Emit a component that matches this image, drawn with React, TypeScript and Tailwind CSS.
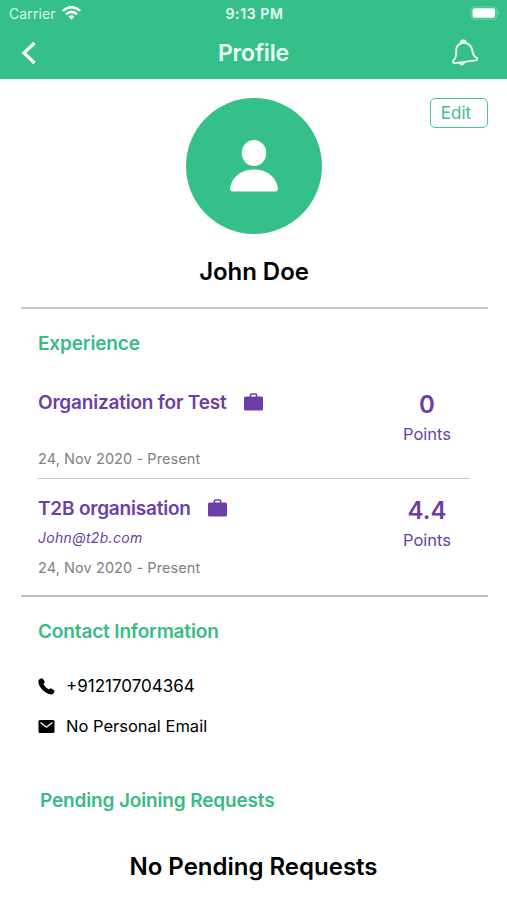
import type { ReactNode } from "react";

function Briefcase() {
  return (
    <svg className="mb-[2px] h-[18px] w-[19px] shrink-0" viewBox="0 0 19 18" fill="#6b3fa5">
      <path
        fillRule="evenodd"
        d="M5.600 3.400V2Q5.600.2 7.400.2h4.200Q13.400.2 13.400 2v1.400h4Q19 3.400 19 5v11q0 1.600-1.600 1.600H1.600Q0 17.600 0 16V5q0-1.600 1.600-1.600zM7.200 3.400h4.600V1.700H7.200z"
      />
    </svg>
  );
}

function StatusBar() {
  return (
    <div className="flex h-7 items-center justify-between pl-[9px] pr-[7px]">
      <div className="flex w-[150px] items-center gap-[6px]">
        <span className="text-[14px] leading-7 tracking-[0.1px] text-[#d9f7e9]">Carrier</span>
        <svg className="mt-[-2px] h-[14px] w-[19px]" viewBox="0 0 19 14" fill="none" stroke="#fff" strokeWidth="2.500">
          <path d="M.8 4.900Q9.500-2.500 18.200 4.900" />
          <path d="M4 8.200Q9.500 3.500 15 8.200" />
          <path d="M6.500 10.600Q9.500 8 12.500 10.600L9.500 13.800z" fill="#fff" stroke="none" />
        </svg>
      </div>
      <span className="text-[14px] font-semibold leading-7 tracking-[0.6px] text-[#e9fff5]">9:13 PM</span>
      <div className="flex w-[150px] justify-end">
        <svg className="mt-[-2px] h-[14px] w-[30px]" viewBox="0 0 30 14" fill="none">
          <rect x="1" y=".8" width="25.800" height="12.400" rx="3.500" stroke="#73d3ab" />
          <rect x="2.500" y="2.200" width="22.600" height="9.600" rx="2" fill="#fff" />
          <path d="M28 4.800Q29.600 6.900 28 9z" fill="#8fdfbc" />
        </svg>
      </div>
    </div>
  );
}

function Header() {
  return (
    <header className="h-[79px] bg-[#34c088]">
      <StatusBar />
      <div className="flex h-[50px] items-center justify-between pl-[21px] pr-[28px]">
        <svg className="h-6 w-[60px]" viewBox="0 0 60 24" fill="none" stroke="#fff" strokeWidth="3.200">
          <path d="M13.500 2L3 12l10.500 10" />
        </svg>
        <h1 className="text-[23px] font-semibold leading-[50px] tracking-[-0.15px] text-[#ecfff6]">Profile</h1>
        <div className="flex w-[53px] justify-end">
          <svg
            className="h-[28px] w-[28px]"
            viewBox="0 0 28 28"
            fill="none"
            stroke="#f0fff8"
            strokeWidth="1.900"
            strokeLinejoin="round"
            strokeLinecap="round"
          >
            <path d="M10.300 4.100C6.400 5.500 5 8.800 5.200 12.500C5.400 17.500 4.600 19.200 2.800 21C1.500 22.500 1.800 24.300 4 24.100L24.400 21.400C26.900 21 26.900 19 25.200 18.400C22.800 17.400 22 15.700 21.300 11.500C20.500 7.300 18.200 4.700 14.600 4" />
            <path d="M9.900 4.400C9.700.8 14.400.4 15.200 4.200Q12.500 3.200 9.900 4.400" />
            <path d="M9 24Q10.800 27.300 13.300 23.400" />
          </svg>
        </div>
      </div>
    </header>
  );
}

interface JobProps {
  name: string;
  email?: string;
  points: string;
}

function Job({ name, email, points }: JobProps) {
  return (
    <div className="flex justify-between">
      <div>
        <div className="flex h-[29px] items-center gap-[17px]">
          <span className="text-[19px] font-semibold leading-[29px] tracking-[-0.2px]">{name}</span>
          <Briefcase />
        </div>
        {email ? (
          <div className="h-[30px] text-[14px] italic leading-[30px] tracking-[0.3px]">{email}</div>
        ) : (
          <div className="h-[27px]" />
        )}
        <div className="h-[29px] text-[14.500px] leading-[29px] tracking-[0.080px] text-[#808080]">24, Nov 2020 - Present</div>
      </div>
      <div className="w-[86px] pt-[2px] text-center">
        <div className="text-[24px] font-semibold leading-[29px]">{points}</div>
        <div className="text-[16.500px] leading-[30px]">Points</div>
      </div>
    </div>
  );
}

function SectionTitle({ children }: { children: ReactNode }) {
  return <h2 className="text-[19px] font-semibold leading-[30px] tracking-[-0.150px] text-[#39bb85]">{children}</h2>;
}

export default function App() {
  return (
    <main className="h-[900px] w-full overflow-hidden bg-white font-['Inter',sans-serif] text-black">
      <Header />

      <section className="ml-[21px] mr-[19px] h-[230px] border-b-2 border-[#c6c6c6]">
        <div className="grid grid-cols-[165px_136px_1fr] pt-[19px]">
          <div className="col-start-2 flex size-[136px] items-center justify-center rounded-full bg-[#34c088]">
            <svg className="h-[52px] w-[48px]" viewBox="0 0 48 52" fill="#fff">
              <ellipse cx="24" cy="13" rx="12.300" ry="13" />
              <path d="M3 51.500Q0 51.500 0 48.500C1.500 37 11 29.500 24 29.500S46.500 37 48 48.500Q48 51.500 45 51.500z" />
            </svg>
          </div>
          <button className="h-[30px] w-[58px] justify-self-end rounded-[5px] border-[1.500px] border-[#4cc596] pr-[6px] text-[17px] leading-[25px] text-[#45bd8c]">
            Edit
          </button>
        </div>
        <div className="mt-[22px] pr-px text-center text-[24px] font-semibold leading-[31px] tracking-[-0.05px]">John Doe</div>
      </section>

      <section className="ml-[21px] mr-[19px] h-[288px] border-b-2 border-[#bfbfbf] pl-[17px] pr-[18px] pt-[20px]">
        <SectionTitle>Experience</SectionTitle>
        <div className="mt-[29px] text-[#6b3fa5]">
          <Job name="Organization for Test" points="0" />
          <div className="mb-[15px] mt-[5px] h-px bg-[#c8c8c8]" />
          <Job name="T2B organisation" email="John@t2b.com" points="4.4" />
        </div>
      </section>

      <section className="px-[38px] pt-[20px]">
        <SectionTitle>Contact Information</SectionTitle>
        <div className="mt-[19px] flex h-[40px] items-center gap-[11px]">
          <svg className="h-[17px] w-[17px]" viewBox="0 0 17 17">
            <path d="M1.400 1.300L3.200.4Q4.200 0 4.900.9L6.600 3.400Q7.100 4.300 6.300 5.100L5.400 6Q7 9.500 10.800 11.500L11.800 10.700Q12.600 10 13.400 10.500L16 12.200Q16.900 12.900 16.400 13.700L15.400 15.500Q14.700 16.600 13.200 16.500C7.200 15.900.6 9.400.3 3.600Q.3 2 1.400 1.300z" />
          </svg>
          <span className="text-[17px] leading-[40px]">+912170704364</span>
        </div>
        <div className="flex h-[40px] items-center gap-[11px]">
          <svg className="h-[13px] w-[17px]" viewBox="0 0 17 13">
            <rect x=".5" width="16" height="13" rx="1.600" />
            <path d="M2.500 2.600L8.500 7l6-4.400" fill="none" stroke="#ddd" strokeWidth="1.500" />
          </svg>
          <span className="text-[16.500px] leading-[40px]">No Personal Email</span>
        </div>
        <div className="mt-[40px] pl-[2px]">
          <SectionTitle>Pending Joining Requests</SectionTitle>
        </div>
      </section>
      <div className="mt-[36px] text-center text-[24px] font-semibold leading-[30px]">No Pending Requests</div>
    </main>
  );
}
